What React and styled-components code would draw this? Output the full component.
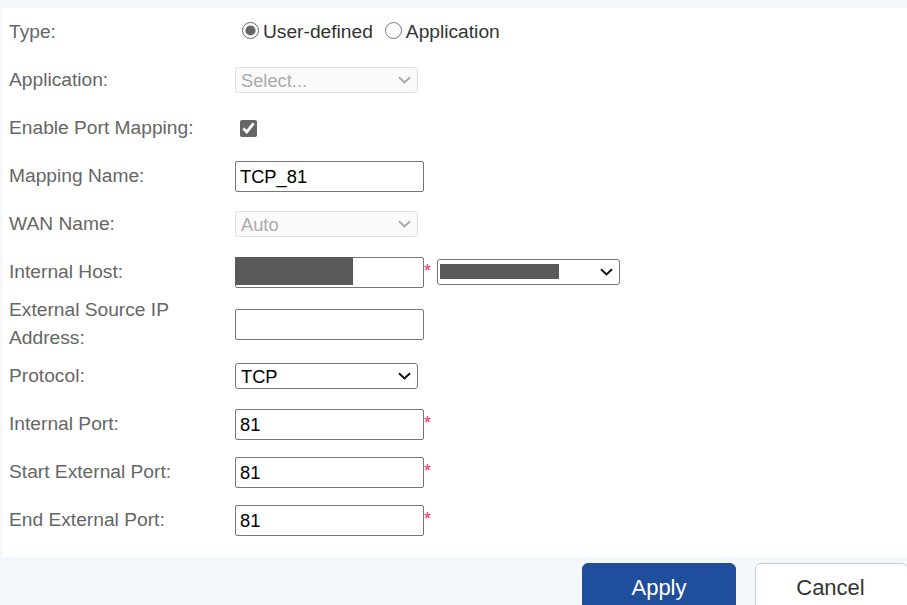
import React from 'react';
import styled, { createGlobalStyle } from 'styled-components';

const Global = createGlobalStyle`
  html, body {
    margin: 0;
    padding: 0;
    height: 100%;
    overflow: hidden;
    background: #f4f7fc;
    font-family: "Liberation Sans", Arial, sans-serif;
  }
`;

const Page = styled.div`
  width: 907px;
  height: 605px;
  padding-top: 8px;
  box-sizing: border-box;
  overflow: hidden;
`;

const Panel = styled.div`
  margin-left: 2px;
  padding: 0 0 13px 7px;
  background: #fff;
`;

const Row = styled.div`
  display: grid;
  grid-template-columns: 226px 1fr;
  align-items: center;
  height: ${(p) => (p.$tall ? 56 : 48)}px;
`;

const Label = styled.label`
  font-size: 19.2px;
  line-height: 28px;
  color: #666;
`;

const Control = styled.div`
  display: flex;
  align-items: center;
`;

const RadioGroup = styled(Control)`
  padding-left: 7px;
  font-size: 19.2px;
  color: #333;
`;

const RadioLabel = styled.label`
  display: flex;
  align-items: center;
  margin-right: 12px;
`;

const Radio = styled.input.attrs({ type: 'radio' })`
  width: 17px;
  height: 17px;
  margin: 0 4px 4px 0;
  accent-color: #666;
`;

const Check = styled.input.attrs({ type: 'checkbox' })`
  width: 17px;
  height: 17px;
  margin: 0 0 0 5px;
  accent-color: #666;
`;

const FieldWrap = styled.div`
  position: relative;
  display: flex;
`;

const TextInput = styled.input`
  width: 189px;
  height: 31px;
  box-sizing: border-box;
  padding: 2px 4px 0;
  border: 1px solid #767676;
  border-radius: 2px;
  font: 18.3px "Liberation Sans", Arial, sans-serif;
  color: #000;
  background: #fff;
  outline: none;
`;

const Select = styled.select`
  appearance: none;
  width: 183px;
  height: 26px;
  box-sizing: border-box;
  padding: 0 0 0 5px;
  border: 1px solid ${(p) => (p.disabled ? '#e0e0e0' : '#767676')};
  border-radius: 3px;
  font: 18.3px "Liberation Sans", Arial, sans-serif;
  color: ${(p) => (p.disabled ? '#aaa' : '#000')};
  background: ${(p) => (p.disabled ? '#fafafa' : '#fff')};
  opacity: 1;
  outline: none;
`;

const Chevron = styled.svg`
  position: absolute;
  right: 6px;
  top: 9px;
  width: 15px;
  height: 8px;
  fill: none;
  stroke: ${(p) => (p.$muted ? '#aaa' : '#111')};
  stroke-width: 2;
  pointer-events: none;
`;

const Star = styled.span`
  align-self: flex-start;
  width: 13px;
  margin-top: 4px;
  box-sizing: border-box;
  font-size: 18px;
  line-height: 20px;
  color: #f5365c;
`;

/* masks hiding the address in the original */
const Redact = styled.div`
  position: absolute;
  left: ${(p) => p.$x}px;
  top: ${(p) => p.$y}px;
  width: ${(p) => p.$w}px;
  height: ${(p) => p.$h}px;
  background: #5a5a5a;
`;

const Footer = styled.div`
  display: flex;
  justify-content: flex-end;
  gap: 19px;
  padding-top: 6px;
`;

const Button = styled.button`
  width: ${(p) => (p.$primary ? 154 : 153)}px;
  height: 48px;
  box-sizing: border-box;
  padding: 2px 0 0;
  border: 1px solid ${(p) => (p.$primary ? '#1f4e9c' : '#c8ccd4')};
  border-radius: 6px;
  font: 22px "Liberation Sans", Arial, sans-serif;
  color: ${(p) => (p.$primary ? '#fff' : '#333')};
  background: ${(p) => (p.$primary ? '#1f4e9c' : '#fff')};
`;

const Cancel = styled(Button)`
  margin-right: -1px;
  padding-right: 2px;
`;

function Dropdown({ disabled, children }) {
  return (
    <FieldWrap>
      <Select disabled={disabled}>{children}</Select>
      <Chevron viewBox="0 0 15 8" $muted={disabled}>
        <path d="M2 1.2 L7.5 6.4 L13 1.2" />
      </Chevron>
    </FieldWrap>
  );
}

function PortRow({ label, value }) {
  return (
    <Row>
      <Label>{label}</Label>
      <Control>
        <TextInput defaultValue={value} />
        <Star>*</Star>
      </Control>
    </Row>
  );
}

export default function App() {
  return (
    <Page>
      <Global />
      <Panel>
        <Row>
          <Label>Type:</Label>
          <RadioGroup>
            <RadioLabel>
              <Radio name="type" defaultChecked />
              User-defined
            </RadioLabel>
            <RadioLabel>
              <Radio name="type" />
              Application
            </RadioLabel>
          </RadioGroup>
        </Row>
        <Row>
          <Label>Application:</Label>
          <Control>
            <Dropdown disabled>
              <option>Select...</option>
            </Dropdown>
          </Control>
        </Row>
        <Row>
          <Label>Enable Port Mapping:</Label>
          <Control>
            <Check defaultChecked />
          </Control>
        </Row>
        <Row>
          <Label>Mapping Name:</Label>
          <Control>
            <TextInput defaultValue="TCP_81" />
          </Control>
        </Row>
        <Row>
          <Label>WAN Name:</Label>
          <Control>
            <Dropdown disabled>
              <option>Auto</option>
            </Dropdown>
          </Control>
        </Row>
        <Row>
          <Label>Internal Host:</Label>
          <Control>
            <FieldWrap>
              <TextInput />
              <Redact $x={0} $y={0} $w={118} $h={28} />
            </FieldWrap>
            <Star>*</Star>
            <FieldWrap>
              <Dropdown>
                <option></option>
              </Dropdown>
              <Redact $x={3} $y={5} $w={119} $h={15} />
            </FieldWrap>
          </Control>
        </Row>
        <Row $tall>
          <Label>
            External Source IP
            <br />
            Address:
          </Label>
          <Control>
            <TextInput />
          </Control>
        </Row>
        <Row>
          <Label>Protocol:</Label>
          <Control>
            <Dropdown>
              <option>TCP</option>
            </Dropdown>
          </Control>
        </Row>
        <PortRow label="Internal Port:" value="81" />
        <PortRow label="Start External Port:" value="81" />
        <PortRow label="End External Port:" value="81" />
      </Panel>
      <Footer>
        <Button $primary>Apply</Button>
        <Cancel>Cancel</Cancel>
      </Footer>
    </Page>
  );
}
